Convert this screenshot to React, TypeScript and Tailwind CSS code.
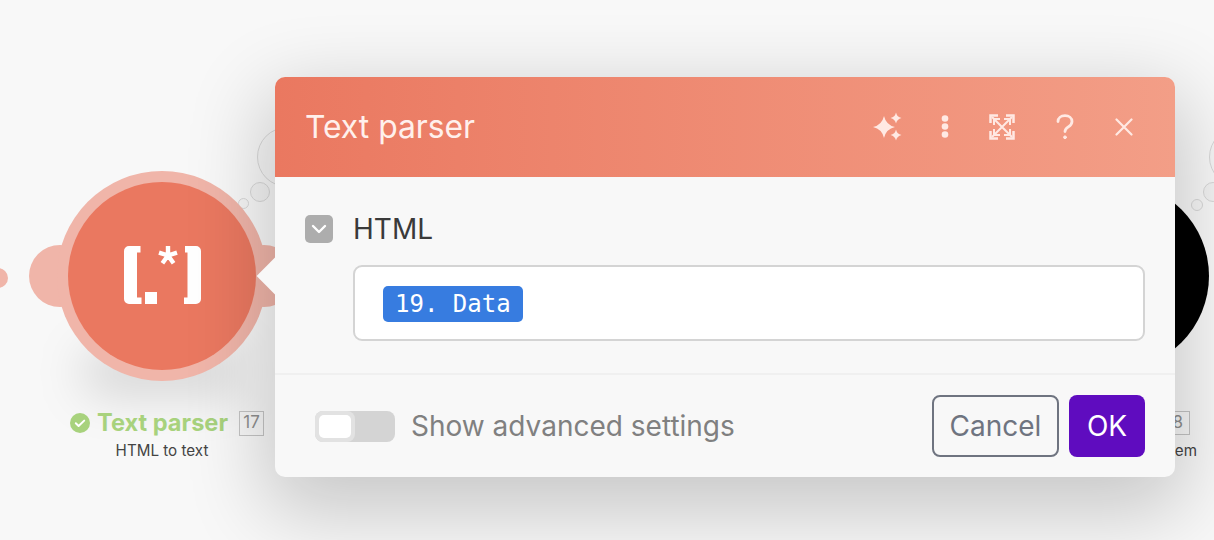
import React from 'react';

const font = { fontFamily: 'Inter, "Liberation Sans", sans-serif' };

const ParserLogo = () => (
  <svg className="mb-[2px]" width="77" height="58" viewBox="0 0 77 58" fill="#fff">
    <path d="M5 0h11.500v6.500H13v45h4.500V58H5a5 5 0 0 1-5-5V5a5 5 0 0 1 5-5z" />
    <rect x="21" y="46" width="12" height="12" />
    <path d="M44 9.500V0M44 9.500l9-2.900M44 9.500l5.600 7.700M44 9.500l-5.600 7.700M44 9.500l-9-2.900" stroke="#fff" strokeWidth="4.400" fill="none" />
    <path d="M61 0h11a5 5 0 0 1 5 5v48a5 5 0 0 1-5 5H60v-6.500h3.500V6.500H61z" />
  </svg>
);

const Sparkles = () => (
  <svg width="30" height="30" viewBox="0 0 30 30" fill="#FFE9E3">
    <path d="M11 4Q13 13 22 15 13 17 11 26 9 17 0 15 9 13 11 4z" />
    <path d="M23 .5Q24 5 28.500 6 24 7 23 11.500 22 7 17.500 6 22 5 23 .5z" />
    <path d="M23 17.500Q24 22 28.500 23 24 24 23 28.500 22 24 17.500 23 22 22 23 17.500z" />
  </svg>
);

const Dots = () => (
  <svg width="10" height="26" viewBox="0 0 10 26" fill="#FFE9E3">
    <circle cx="5" cy="4.500" r="3.300" />
    <circle cx="5" cy="12.500" r="3.300" />
    <circle cx="5" cy="20.500" r="3.300" />
  </svg>
);

const Expand = () => (
  <svg width="26" height="26" viewBox="0 0 26 26" fill="none" stroke="#FFE9E3" strokeWidth="2.500">
    <path d="M1.500 9V1.500H9M17 1.500h7.500V9M24.500 17v7.500H17M9 24.500H1.500V17" />
    <path d="M3 3l20 20M23 3L3 23" strokeWidth="2" />
    <path d="M5 11V5h6M15 5h6v6M21 15v6h-6M11 21H5v-6" strokeWidth="2" />
  </svg>
);

const Help = () => (
  <svg width="18" height="26" viewBox="0 0 18 26" fill="none" stroke="#FFE9E3" strokeWidth="2.800" strokeLinecap="round">
    <path d="M2 7.500C2 4 5 1.700 9 1.700s7 2.300 7 5.800c0 2.700-1.500 4-3.700 5.400C10 14.300 9 15.300 9 17.500" />
    <circle cx="9" cy="23.300" r="1.400" fill="#FFE9E3" stroke="#FFE9E3" strokeWidth="1" />
  </svg>
);

const Close = () => (
  <svg width="18" height="18" viewBox="0 0 18 18" fill="none" stroke="#FFE9E3" strokeWidth="2.200" strokeLinecap="round">
    <path d="M1.500 1.500l15 15M16.500 1.500l-15 15" />
  </svg>
);

const Check = () => (
  <svg width="20" height="20" viewBox="0 0 20 20">
    <circle cx="10" cy="10" r="10" fill="#A8D27D" />
    <path d="M5.800 10.300l2.800 2.700 5.600-5.400" fill="none" stroke="#fff" strokeWidth="2" strokeLinecap="round" strokeLinejoin="round" />
  </svg>
);

const Canvas = () => (
  <>
    {/* end of the previous connector */}
    <div className="absolute left-[-12px] top-[268px] h-[20px] w-[20px] rounded-full bg-[#f0b5a9]" />

    {/* note bubbles */}
    <div className="absolute left-[238px] top-[198px] h-[11px] w-[11px] rounded-full border border-[#d8d8d8] bg-[#f6f6f6]" />
    <div className="absolute left-[250px] top-[182px] h-[20px] w-[20px] rounded-full border border-[#d8d8d8] bg-[#f3f3f3]" />
    <div className="absolute left-[257px] top-[127px] h-[60px] w-[60px] rounded-full border border-[#d8d8d8] bg-[#f6f6f6]" />

    {/* text parser node */}
    <div className="absolute left-[29px] top-[245px] h-[62px] w-[62px] rounded-full bg-[#f0b5a9]" />
    <div className="absolute left-[233px] top-[245px] h-[62px] w-[62px] rounded-full bg-[#f0b5a9]" />
    <div className="absolute left-[82px] top-[350px] h-[44px] w-[160px] rounded-full bg-black/15 blur-xl" />
    <div className="absolute left-[57px] top-[171px] flex h-[210px] w-[210px] items-center justify-center rounded-full bg-[#f0b5a9]">
      <div className="flex h-[188px] w-[188px] items-center justify-center rounded-full bg-[#ea7860]">
        <ParserLogo />
      </div>
    </div>
    <div className="absolute left-[70px] top-[409px] flex items-center gap-[7px]">
      <Check />
      <span className="text-[23.600px] font-bold leading-[28px] text-[#a8d27d]">Text parser</span>
      <span className="ml-[4px] flex h-[25px] w-[25px] items-center justify-center border border-[#c4c4c4] text-[17px] text-[#8f8f8f]">17</span>
    </div>
    <div className="absolute left-[62px] top-[441px] w-[200px] text-center text-[15.200px] leading-[20px] text-[#444]">HTML to text</div>

    {/* next node, mostly hidden by the dialog */}
    <div className="absolute left-[1191px] top-[199px] h-[12px] w-[12px] rounded-full border border-[#d8d8d8] bg-[#f6f6f6]" />
    <div className="absolute left-[1203px] top-[182px] h-[20px] w-[20px] rounded-full border border-[#d8d8d8] bg-[#f3f3f3]" />
    <div className="absolute left-[1209px] top-[127px] h-[60px] w-[60px] rounded-full border border-[#d8d8d8] bg-[#f6f6f6]" />
    <div className="absolute left-[1021px] top-[182px] h-[188px] w-[188px] rounded-full bg-black" />
    <div className="absolute left-[1155px] top-[411px] flex h-[24px] w-[35px] items-center justify-end border border-[#c4c4c4] pr-[6px] text-[17px] text-[#8f8f8f]">18</div>
    <div className="absolute left-[1170px] top-[441px] text-[15.200px] leading-[20px] text-[#444]">tem</div>
  </>
);

const Dialog = () => (
  <>
    <div className="absolute left-[275px] top-[77px] flex h-[400px] w-[900px] flex-col overflow-hidden rounded-[10px] bg-[#f8f8f8] shadow-[0_25px_80px_10px_rgba(0,0,0,0.2)]">
      <div className="flex h-[100px] shrink-0 items-center justify-between bg-gradient-to-r from-[#ea7860] to-[#f39e87] pl-[30px] pr-[42px]">
        <span className="text-[31.800px] font-normal text-[#fff0ec]">Text parser</span>
        <div className="flex items-center">
          <Sparkles />
          <div className="ml-[37px]"><Dots /></div>
          <div className="ml-[39px]"><Expand /></div>
          <div className="ml-[41px]"><Help /></div>
          <div className="ml-[41px]"><Close /></div>
        </div>
      </div>

      <div className="flex h-[198px] shrink-0 flex-col border-b-2 border-[#f0f0f0] pl-[30px] pr-[30px] pt-[36px]">
        <div className="flex items-center gap-[20px]">
          <div className="flex h-[28px] w-[28px] items-center justify-center rounded-[5px] bg-[#adadad]">
            <svg width="16" height="10" viewBox="0 0 16 10" fill="none" stroke="#fff" strokeWidth="2.400" strokeLinecap="round" strokeLinejoin="round">
              <path d="M2 2l6 6 6-6" />
            </svg>
          </div>
          <span className="text-[28px] leading-[32px] text-[#3a3a3a]">HTML</span>
        </div>
        <div className="ml-[48px] mt-[20px] flex h-[76px] items-center rounded-[9px] border-2 border-[#d4d4d4] bg-white pl-[28px] pt-[2px]">
          <span className="flex h-[36px] items-center rounded-[5px] bg-[#377ce0] px-[12px] text-[24px] text-white" style={{ fontFamily: '"DejaVu Sans Mono", monospace' }}>19. Data</span>
        </div>
      </div>

      <div className="flex flex-1 items-center justify-between pl-[40px] pr-[30px]">
        <div className="flex items-center gap-[16px]">
          <div className="flex h-[31px] w-[80px] items-center rounded-[8px] bg-[#d4d4d4]">
            <div className="flex h-[31px] w-[40px] items-center justify-center rounded-[8px] bg-[#e2e2e2]">
              <div className="h-[23px] w-[32px] rounded-[5px] bg-white" />
            </div>
          </div>
          <span className="text-[28px] text-[#808080]">Show advanced settings</span>
        </div>
        <div className="flex items-center gap-[10px]">
          <button className="h-[62px] w-[127px] rounded-[8px] border-2 border-[#6f7480] text-[28px] text-[#6f7480]">Cancel</button>
          <button className="h-[62px] w-[76px] rounded-[8px] bg-[#5f0cbf] text-[28px] text-white">OK</button>
        </div>
      </div>
    </div>
    {/* pointer towards the node */}
    <div className="absolute left-[262px] top-[263px] h-[26px] w-[26px] rotate-45 bg-[#f8f8f8]" />
  </>
);

export default function App() {
  return (
    <div className="relative h-[540px] w-[1214px] overflow-hidden bg-[#f8f8f8]" style={font}>
      <Canvas />
      <Dialog />
    </div>
  );
}
